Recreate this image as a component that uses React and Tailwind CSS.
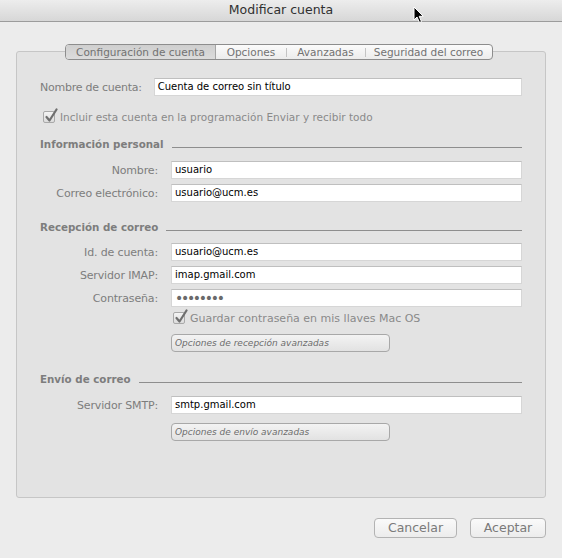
import React from "react";

function CheckBox() {
  return (
    <div className="relative w-[12px] h-[12px] shrink-0 rounded-[2px] border border-[#a9a9a9] bg-gradient-to-b from-[#f4f4f4] to-[#dcdcdc]">
      <svg
        className="absolute left-[1px] top-[-4px]"
        width="13"
        height="15"
        viewBox="0 0 13 15"
      >
        <path
          d="M1.5 9 L4.5 12.5 L11.5 1.5"
          fill="none"
          stroke="#6f6f6f"
          strokeWidth="2.2"
          strokeLinecap="round"
          strokeLinejoin="round"
        />
      </svg>
    </div>
  );
}

function Field({ label, children, mt }) {
  return (
    <div className={`flex items-center h-[18px] ${mt}`}>
      <div className="w-[118px] text-right text-[11px] tracking-[-0.15px] text-[#7d7d7d] leading-none">{label}</div>
      <div className="ml-[13px] flex-1 h-[18px] flex items-center pl-[3px] bg-white border border-[#d6d6d6] border-t-[#bfbfbf] text-[10px] text-black leading-none">
        {children}
      </div>
    </div>
  );
}

function Section({ title, mt }) {
  return (
    <div className={`flex items-center h-[14px] ${mt}`}>
      <span className="text-[10.3px] font-bold text-[#7d7d7d] leading-none">{title}</span>
      <div className="flex-1 h-px bg-[#8e8e8e] ml-[8px] mt-[6px]" />
    </div>
  );
}

function AdvButton({ label, mt }) {
  return (
    <div className={`ml-[131px] w-[219px] h-[18px] flex items-center pl-[3px] rounded-[4px] border border-[#a8a8a8] bg-gradient-to-b from-[#f3f3f3] to-[#e2e2e2] text-[9px] italic text-[#6d6d6d] leading-none ${mt}`}>
      {label}
    </div>
  );
}

export default function App() {
  const tabs = [
    { name: "Configuración de cuenta", w: "w-[150px]", active: true },
    { name: "Opciones", w: "w-[70px]" },
    { name: "Avanzadas", w: "w-[79px]" },
    { name: "Seguridad del correo", w: "w-[127px]" },
  ];

  return (
    <div className="relative w-[562px] h-[558px] bg-[#ececec] overflow-hidden font-['DejaVu_Sans',sans-serif]">
      {/* title bar */}
      <div className="h-[22px] flex items-center justify-center bg-gradient-to-b from-[#ededed] to-[#d7d7d7] border-b border-[#9c9c9c]">
        <span className="text-[12.5px] text-[#303030] leading-none">Modificar cuenta</span>
      </div>

      {/* tabs */}
      <div className="relative z-10 mt-[22px] flex justify-center pr-[4px]">
        <div className="flex h-[16px] rounded-[4px] border border-[#8d8d8d] bg-gradient-to-b from-[#fbfbfb] to-[#ececec] overflow-hidden">
          {tabs.map((t, i) => (
            <div
              key={t.name}
              className={`${t.w} relative flex items-center justify-center text-[10.5px] leading-none text-[#727272] ${
                t.active ? "bg-gradient-to-b from-[#cfcfcf] to-[#dcdcdc] border-r border-[#a5a5a5]" : ""
              }`}
            >
              {i > 1 && <div className="absolute left-0 top-[3px] h-[9px] w-px bg-[#c4c4c4]" />}
              {t.name}
            </div>
          ))}
        </div>
      </div>

      {/* panel */}
      <div className="mt-[-9px] ml-[16px] w-[530px] h-[447px] rounded-[3px] border border-[#c6c6c6] bg-[#e3e3e3] px-[23px] pt-[26px]">
        <div className="flex items-center h-[18px]">
          <div className="text-[11px] tracking-[-0.25px] text-[#7d7d7d] leading-none">Nombre de cuenta:</div>
          <div className="ml-[12px] flex-1 h-[18px] flex items-center pl-[3px] bg-white border border-[#d6d6d6] border-t-[#bfbfbf] text-[10px] text-black leading-none">
            Cuenta de correo sin título
          </div>
        </div>

        <div className="mt-[14px] ml-[3px] flex items-center h-[14px]">
          <CheckBox />
          <span className="ml-[5px] text-[10.5px] text-[#8a8a8a] leading-none">
            Incluir esta cuenta en la programación Enviar y recibir todo
          </span>
        </div>

        <Section title="Información personal" mt="mt-[13px]" />
        <Field label="Nombre:" mt="mt-[10px]">usuario</Field>
        <Field label="Correo electrónico:" mt="mt-[5px]">usuario@ucm.es</Field>

        <Section title="Recepción de correo" mt="mt-[18px]" />
        <Field label="Id. de cuenta:" mt="mt-[9px]">usuario@ucm.es</Field>
        <Field label="Servidor IMAP:" mt="mt-[5px]">imap.gmail.com</Field>
        <Field label="Contraseña:" mt="mt-[5px]">
          <span className="text-[14px] tracking-[-2.3px] text-[#6a6a6a]">••••••••</span>
        </Field>

        <div className="mt-[4px] ml-[133px] flex items-center h-[14px]">
          <CheckBox />
          <span className="ml-[5px] text-[11px] text-[#8a8a8a] leading-none">
            Guardar contraseña en mis llaves Mac OS
          </span>
        </div>
        <AdvButton label="Opciones de recepción avanzadas" mt="mt-[9px]" />

        <Section title="Envío de correo" mt="mt-[20px]" />
        <Field label="Servidor SMTP:" mt="mt-[10px]">smtp.gmail.com</Field>
        <AdvButton label="Opciones de envío avanzadas" mt="mt-[9px]" />
      </div>

      {/* buttons */}
      <div className="mt-[20px] flex justify-end gap-[13px] pr-[16px]">
        <div className="w-[83px] h-[20px] flex items-center justify-center rounded-[4px] border border-[#b3b3b3] bg-gradient-to-b from-[#fafafa] to-[#ececec] text-[12.5px] text-[#7a7a7a] leading-none">
          Cancelar
        </div>
        <div className="w-[76px] h-[20px] flex items-center justify-center rounded-[4px] border border-[#b3b3b3] bg-gradient-to-b from-[#fafafa] to-[#ececec] text-[12.5px] text-[#7a7a7a] leading-none">
          Aceptar
        </div>
      </div>

      {/* mouse cursor */}
      <svg className="absolute left-[413px] top-[6px]" width="12" height="18" viewBox="0 0 12 18">
        <path
          d="M1 1 L1 14 L4 11 L6.5 16.5 L8.5 15.6 L6.2 10.3 L10.3 10.3 Z"
          fill="#000"
          stroke="#fff"
          strokeWidth="1"
          strokeLinejoin="round"
        />
      </svg>
    </div>
  );
}
